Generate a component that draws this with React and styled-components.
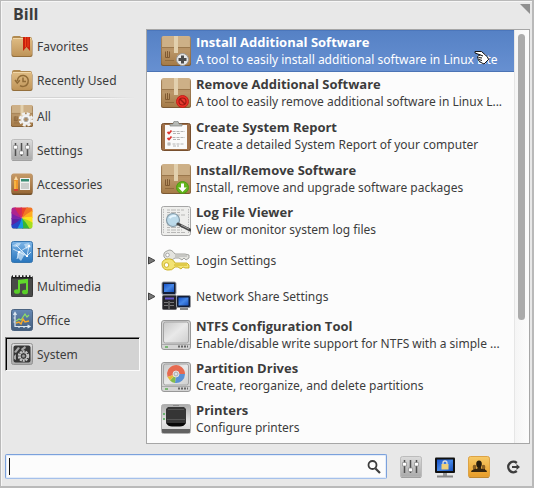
import React from "react";
import styled, { createGlobalStyle, css } from "styled-components";

const GlobalStyle = createGlobalStyle`
  *, *::before, *::after { box-sizing: border-box; }
  body { margin: 0; background: #e8e8e8; }
  button, input { font: inherit; color: inherit; }
  svg { flex: none; }
`;

const Window = styled.main`
  display: flex;
  flex-direction: column;
  min-height: 100vh;
  padding: 0 2px 7px 4px;
  border: 1px solid #b9b9b9;
  border-width: 1px 2px 2px 1px;
  border-bottom-color: #bababa;
  box-shadow: inset 1px 1px 0 #f6f6f6;
  background: #e8e8e8;
  color: #3c3c3c;
  font-family: "Noto Sans", "Open Sans", sans-serif;
  font-size: 12px;
  line-height: 17px;
`;

const Header = styled.header`
  display: flex;
  justify-content: space-between;
  align-items: flex-start;
  height: 28px;
  padding: 3px 0 0 8px;
`;

const UserName = styled.h1`
  margin: 0;
  font-family: "Open Sans", "Noto Sans", sans-serif;
  font-size: 16px;
  line-height: 20px;
  font-weight: 700;
`;

const ResizeGrip = styled.span`
  width: 10px;
  height: 10px;
  background: #8f8f8f;
  clip-path: polygon(0 0, 100% 0, 100% 100%);
`;

const Body = styled.div`
  flex: 1;
  display: grid;
  grid-template-columns: 135px minmax(0, 1fr);
  gap: 6px;
`;

const Sidebar = styled.nav`
  display: flex;
  flex-direction: column;
`;

const Category = styled.button`
  display: flex;
  align-items: center;
  gap: 4px;
  height: 34px;
  padding: 0 0 0 4px;
  border: 2px solid transparent;
  background: transparent;
  text-align: left;
  white-space: nowrap;
  ${(p) =>
    p.$active &&
    css`
      background: #d3d3d3;
      border-color: #777 #fafafa #fafafa #777;
      border-width: 1px;
      padding-left: 5px;
      box-shadow: inset 1px 1px 0 #000;
    `}
`;

const Divider = styled.hr`
  width: 126px;
  height: 2px;
  margin: 0 0 0 4px;
  border: 0;
  background: linear-gradient(90deg, #e8e8e8, #d4d4d4 20%, #d4d4d4 70%, #e8e8e8) top / 100% 1px no-repeat,
    linear-gradient(90deg, #e8e8e8, #fafafa 20%, #fafafa 70%, #e8e8e8) bottom / 100% 1px no-repeat;
`;

const ListPanel = styled.section`
  display: grid;
  grid-template-columns: minmax(0, 1fr) 15px;
  border: 1px solid #a6a6a6;
  background: #fcfcfc;
`;

const AppList = styled.ul`
  margin: 0;
  padding: 0;
  list-style: none;
`;

const AppRow = styled.button`
  display: flex;
  align-items: center;
  width: 100%;
  height: ${(p) => p.$height}px;
  padding: 0;
  border: 0;
  background: transparent;
  text-align: left;
  ${(p) =>
    p.$selected &&
    css`
      color: #fff;
      background: linear-gradient(#5581c5, #6790d1);
      box-shadow: inset 0 1px 0 #4b76bb, inset 0 -1px 0 #4b74b5;
    `}
`;

const Expander = styled.span`
  display: flex;
  flex: none;
  width: 14px;
`;

const AppText = styled.span`
  display: flex;
  flex-direction: column;
  min-width: 0;
  padding-left: 5px;
  white-space: nowrap;
`;

const Title = styled.strong`
  font-family: "Open Sans", "Noto Sans", sans-serif;
  font-size: 13px;
  font-weight: 700;
`;

const ScrollTrack = styled.div`
  display: flex;
  justify-content: center;
  padding: 4px 1px 0 0;
  border-left: 1px solid #e6e6e6;
  background: linear-gradient(90deg, #f5f5f5, #fcfcfc);
`;

const ScrollThumb = styled.div`
  width: 7px;
  height: 70%;
  border-radius: 4px;
  background: #ababab;
`;

const Footer = styled.footer`
  display: flex;
  align-items: center;
  margin-top: 10px;
`;

const SearchBox = styled.label`
  position: relative;
  display: flex;
  flex: 1;
  align-items: center;
  height: 25px;
  padding-right: 4px;
  border: 1px solid #7ba1dc;
  border-bottom-color: #a5c0ea;
  border-radius: 2px;
  background: #fcfcfc;
  box-shadow: inset 0 0 0 1px #e3ecf9;
`;

const SearchInput = styled.input`
  flex: 1;
  min-width: 0;
  height: 21px;
  padding: 0 4px;
  border: 0;
  outline: 0;
  background: transparent;
  caret-color: transparent;
`;

const Caret = styled.span`
  position: absolute;
  left: 3px;
  top: 3px;
  width: 1px;
  height: 17px;
  background: #111;
`;

const Actions = styled.div`
  display: flex;
  gap: 12px;
  padding: 0 6px 0 13px;
`;

const ActionButton = styled.button`
  display: flex;
  padding: 0;
  border: 0;
  background: transparent;
`;

const Pointer = styled.svg`
  position: absolute;
  left: 474px;
  top: 50px;
  pointer-events: none;
`;

const Svg = ({ size = 22, children }) => (
  <svg width={size} height={size} viewBox={`0 0 ${size} ${size}`} aria-hidden="true">
    {children}
  </svg>
);

const GradientDefs = styled.svg`
  display: block;
`;

const Gradients = () => (
  <GradientDefs width="0" height="0" aria-hidden="true">
    <defs>
      <linearGradient id="tan" x2="0" y2="1"><stop stopColor="#dfbc84" /><stop offset="1" stopColor="#bf9458" /></linearGradient>
      <linearGradient id="box" x2="0" y2="1"><stop stopColor="#cfb28a" /><stop offset="1" stopColor="#a57b48" /></linearGradient>
      <linearGradient id="silver" x2="0" y2="1"><stop stopColor="#dcdcdc" /><stop offset="1" stopColor="#a9a9a9" /></linearGradient>
      <linearGradient id="drive" x2="1" y2="1"><stop stopColor="#c6c6c6" /><stop offset=".5" stopColor="#e9e9e9" /><stop offset="1" stopColor="#cecece" /></linearGradient>
      <linearGradient id="sky" x2="0" y2="1"><stop stopColor="#7eb5e7" /><stop offset="1" stopColor="#2775bd" /></linearGradient>
      <linearGradient id="slate" x2="0" y2="1"><stop stopColor="#6689b5" /><stop offset="1" stopColor="#435d7c" /></linearGradient>
      <linearGradient id="screen" x2="1" y2="1"><stop stopColor="#1652cb" /><stop offset=".5" stopColor="#4687e6" /><stop offset="1" stopColor="#1650bd" /></linearGradient>
      <linearGradient id="amber" x2="0" y2="1"><stop stopColor="#f7ca68" /><stop offset="1" stopColor="#e79c27" /></linearGradient>
      <linearGradient id="wood" x2="0" y2="1"><stop stopColor="#c79b69" /><stop offset="1" stopColor="#976836" /></linearGradient>
      <linearGradient id="printer" x2="0" y2="1"><stop stopColor="#aaa" /><stop offset=".6" stopColor="#e9e9e9" /><stop offset="1" stopColor="#ccc" /></linearGradient>
    </defs>
  </GradientDefs>
);

const Folder = ({ children }) => (
  <Svg>
    <path d="M1 3Q1 1 3 1H9L10 2H19Q21 2 21 4V8H1Z" fill="#b18a50" />
    <rect x=".5" y="4" width="21" height="18" rx="2" fill="#946f3c" />
    <rect x="1" y="3" width="20" height="18" rx="2" fill="url(#tan)" />
    <path d="M2 3.500H20" stroke="#f0d6a7" />
    {children}
  </Svg>
);

const FavoritesIcon = () => (
  <Folder>
    <path d="M12 2H19V16L15.500 12L12 16Z" fill="#c8200c" />
    <path d="M14.500 2V12M17 2V12" stroke="#f1431b" />
  </Folder>
);

const RecentIcon = () => (
  <Folder>
    <path d="M6.300 12A5.500 5.500 0 1 1 9 16.700M4 11L6.300 14L8.800 11.300M12 8.500V12.500H15" fill="none" stroke="#906b37" strokeWidth="1.500" />
  </Folder>
);

const Carton = () => (
  <>
    <rect x="0" y="1" width="30" height="29" rx="2" fill="#7c5a34" />
    <rect x=".5" y="0" width="29" height="29" rx="2" fill="url(#box)" />
    <path d="M2 1H28L29 11H1Z" fill="#cdb087" />
    <path d="M1 11.500H29" stroke="#9b784d" />
    <path d="M1 12H29V14H1Z" fill="#b89366" />
    <path d="M13 0H17V17H13Z" fill="#e2d0ae" />
    <path d="M4.500 15.500V21.500H8.500V15.500M6.500 15V21" fill="none" stroke="#805a32" />
    <path d="M4 24.500H13" stroke="#916b3d" />
  </>
);

const CartonAdd = () => (
  <Svg size={30}>
    <Carton />
    <circle cx="21.500" cy="23.500" r="6" fill="#e8e8e8" stroke="#999" />
    <path d="M21.500 19.500V27.500M17.500 23.500H25.500" stroke="#4b4b4b" strokeWidth="3" />
  </Svg>
);

const CartonForbid = () => (
  <Svg size={30}>
    <Carton />
    <circle cx="21.500" cy="23.500" r="6" fill="#ef3026" stroke="#c3211a" />
    <circle cx="21.500" cy="23.500" r="3.500" fill="#e63a2e" stroke="#9c1a12" strokeWidth="1.200" />
    <path d="M19 21L24 26" stroke="#9c1a12" strokeWidth="1.500" />
  </Svg>
);

const CartonDown = () => (
  <Svg size={30}>
    <Carton />
    <circle cx="21.500" cy="23.500" r="6" fill="#64b51c" stroke="#4f9a16" />
    <path d="M20 19.500H23V23.500H25.800L21.500 28L17.200 23.500H20Z" fill="#fff" />
  </Svg>
);

const AllIcon = () => (
  <Svg>
    <svg width="22" height="22" viewBox="0 0 30 30"><Carton /></svg>
    <circle cx="15" cy="14.500" r="5" fill="#f5f5f5" stroke="#ddd" />
    <circle cx="15" cy="14.500" r="6" fill="none" stroke="#f1f1f1" strokeWidth="2.500" strokeDasharray="3 1.710" />
    <circle cx="15" cy="14.500" r="2.200" fill="#ad8d66" stroke="#aaa" />
  </Svg>
);

const MixerIcon = () => (
  <Svg>
    <rect x=".5" y="1" width="21" height="21" rx="2" fill="#858585" />
    <rect x=".5" y=".5" width="21" height="20.500" rx="2" fill="url(#silver)" stroke="#bcbcbc" />
    <path d="M4.500 4V17M10.500 4V17M16.500 4V17" stroke="#505050" strokeWidth="1.500" />
    <path d="M2.500 6.500H6.500V10H2.500ZM8.500 12H12.500V15.500H8.500ZM14.500 6.500H18.500V10H14.500Z" fill="#fff" stroke="#898989" strokeWidth=".7" />
  </Svg>
);

const AccessoriesIcon = () => (
  <Svg>
    <rect x=".5" y="1" width="21" height="21" rx="2" fill="#71502b" />
    <rect x=".5" y=".5" width="21" height="20" rx="2" fill="url(#wood)" />
    <path d="M3 7L5 3L7 7V18H3Z" fill="#ee972c" />
    <path d="M3 7L5 3L7 7Z" fill="#f6ddb0" />
    <path d="M4 8V16" stroke="#ffd159" />
    <path d="M3 16H7V18H3Z" fill="#d54435" />
    <rect x="9" y="5" width="10" height="12" fill="#f2f2f0" />
    <rect x="10" y="6" width="8" height="2.500" fill="#358b72" />
    <path d="M10.500 11H18M10.500 13H18M10.500 15H18" stroke="#51605c" strokeDasharray="1 1" />
  </Svg>
);

const WHEEL = ["#e8432c", "#f27725", "#ffad20", "#ffe31a", "#a6df20", "#36b735", "#159be0", "#2449c9", "#5a22a3", "#7c23a9", "#ad248f", "#d52a57"];
const GraphicsIcon = () => (
  <Svg>
    <clipPath id="graphicsClip"><rect x=".5" y=".5" width="21" height="21" rx="2" /></clipPath>
    <g clipPath="url(#graphicsClip)">
      {WHEEL.map((color, i) => (
        <path key={color} d="M11 11Q9 3 10 -6L20 -4Q14 5 11 11Z" fill={color} transform={`rotate(${i * 30} 11 11)`} />
      ))}
      <path d="M0 21.500H22" stroke="#545454" opacity=".6" />
    </g>
  </Svg>
);

const InternetIcon = () => (
  <Svg>
    <rect x=".5" y=".5" width="21" height="21" rx="2" fill="url(#sky)" stroke="#3876ae" />
    <path d="M1 5L6 2H10L8 5L5 6ZM13 3L18 2L20 6L15 8ZM6 12L11 10L14 13L10 20L7 17Z" fill="#c5e0f5" opacity=".75" />
    <path d="M2 8L8 11L18 5M8 11L6 18M8 11L16 15L20 11M5 4L16 15M18 5L16 15" stroke="#e8f5ff" fill="none" strokeWidth=".8" />
    <path d="M7 10H9V12H7ZM15 14H17V16H15ZM17 4H19V6H17Z" fill="#fff" />
  </Svg>
);

const MultimediaIcon = () => (
  <Svg>
    <rect x=".5" y="1" width="21" height="21" rx="1.500" fill="#484a48" stroke="#363736" />
    <path d="M1 2H21" stroke="#1c1c1c" strokeWidth="3" />
    <path d="M2 1H21" stroke="#ececec" strokeWidth="2" strokeDasharray="2 1.500" />
    <path d="M8 16V6L16 5V16" fill="none" stroke="#61da2c" strokeWidth="2" />
    <path d="M8 7.500L16 6.500" stroke="#61da2c" strokeWidth="3" />
    <ellipse cx="6" cy="16.500" rx="3" ry="2.300" fill="#58ce27" />
    <ellipse cx="14" cy="17" rx="3" ry="2.300" fill="#58ce27" />
  </Svg>
);

const OfficeIcon = () => (
  <Svg>
    <rect x=".5" y=".5" width="21" height="21" rx="2" fill="url(#slate)" stroke="#4a6381" />
    <path d="M4 4V17.500H18M2.500 6L4 3.500L5.500 6M16.500 16L19 17.500L16.500 19M2.500 9H4M2.500 13H4M8 17.500V19M13 17.500V19" fill="none" stroke="#dce7ef" strokeWidth="1.200" />
    <path d="M5 12L8 10L10 11L14 5L16 8L18 6" fill="none" stroke="#8fdf65" strokeWidth="1.200" />
    <path d="M5 14L8 13L10 15L12 10L14 13L18 12" fill="none" stroke="#f6a92b" strokeWidth="1.500" />
  </Svg>
);

const SystemIcon = () => (
  <Svg>
    <rect x=".5" y=".5" width="21" height="21" rx="2" fill="url(#silver)" stroke="#929292" />
    <rect x="2.500" y="2.500" width="17" height="17" rx="2" fill="#353535" />
    <circle cx="12.500" cy="13" r="4.500" fill="none" stroke="#c6c6c6" strokeWidth="2.500" strokeDasharray="2 .830" />
    <circle cx="12.500" cy="13" r="3.500" fill="#414141" stroke="#c6c6c6" />
    <circle cx="12.500" cy="13" r="1.500" fill="#999" />
    <path d="M3 9L7 4L9 5L5 10ZM10 6L14 3L15 5L11 8ZM3 13L5 11V17L3 16Z" fill="#a6a6a6" />
  </Svg>
);

const ReportIcon = () => (
  <Svg size={30}>
    <rect x=".5" y="2.500" width="29" height="27" rx="2" fill="#a17149" stroke="#78502f" />
    <rect x="4" y="4" width="22" height="24" fill="#fafafa" />
    <path d="M9 5V3H12Q12 0 15 0T18 3H21V5Z" fill="#b7bab6" stroke="#80827f" strokeWidth=".7" />
    <path d="M6.500 11L8 12.500L10.500 9.500M6.500 17L8 18.500L10.500 15.500" stroke="#de3732" strokeWidth="1.800" fill="none" />
    <path d="M11.500 10.500H24M12 12.500H19M11.500 16.500H24M12 18.500H19M11.500 23H23M12 25H18" stroke="#a3a3a3" strokeWidth=".8" strokeDasharray="3 1" />
    <rect x="7" y="22" width="2" height="2" fill="none" stroke="#999" strokeWidth=".8" />
  </Svg>
);

const LogIcon = () => (
  <Svg size={30}>
    <rect x=".5" y=".5" width="29" height="29" rx="2" fill="#eeeeec" stroke="#a6a6a6" />
    <path d="M2.500 3V28M27.500 3V28" stroke="#bbb" strokeDasharray="1.500 1" />
    <path d="M6 4H23M6 6.500H20M6 9H24M6 19H17M6 21.500H24M6 24H21M6 26.500H24" stroke="#aaa" strokeWidth=".8" strokeDasharray="3 1 5 1" />
    <circle cx="12" cy="14" r="6.500" fill="#b6d7ea" fillOpacity=".9" stroke="#849aa7" strokeWidth="1.200" />
    <path d="M8.500 12Q11 9 15 10" stroke="#e6f6ff" strokeWidth="2" fill="none" />
    <path d="M17 18L29 24" stroke="#454545" strokeWidth="3" strokeLinecap="round" />
    <path d="M20 19L28 23" stroke="#a7a7a7" />
  </Svg>
);

const KeysIcon = () => (
  <Svg size={30}>
    <g strokeLinejoin="round" strokeWidth=".8">
      <path d="M3 12Q2 7 6 6Q10 3 14 9H24L28 10V13L25 15L23 13L21 15L18 13H14Q9 17 5 14Z" fill="#e4e4df" stroke="#8f908b" />
      <path d="M14 11H26" stroke="#999" />
      <circle cx="6.500" cy="10" r="1.800" fill="#fff" stroke="#999" />
      <path d="M1 19Q1 15 6 14Q12 13 14 18H26L28 20V23H24L22 22L20 24L17 22H14Q11 26 6 25Q1 24 1 19Z" fill="#f3e373" stroke="#c2a40e" />
      <path d="M13 20H26" stroke="#c2a40e" />
      <circle cx="5.500" cy="20" r="2.300" fill="#fff" stroke="#c2a40e" />
    </g>
  </Svg>
);

const NetworkIcon = () => (
  <Svg size={30}>
    <rect x="1.500" y="14.500" width="14" height="14" rx="1" fill="#252529" stroke="#65656b" />
    <path d="M4 17.500H13" stroke="#6555cd" strokeWidth="2" />
    <path d="M3 21.500H7M9 21.500H13M3 24.500H7M9 24.500H13" stroke="#77777a" />
    <path d="M8 20V28" stroke="#aaa" strokeWidth=".8" />
    <rect x="1" y="1" width="14" height="12.500" rx="1.500" fill="#121e38" stroke="#96999f" />
    <rect x="3" y="3" width="10" height="8" fill="url(#screen)" />
    <rect x="15.500" y="14.500" width="14" height="12" rx="1.500" fill="#121e38" stroke="#96999f" />
    <rect x="17.500" y="16.500" width="10" height="8" fill="url(#screen)" />
    <path d="M19 28H27" stroke="#888" strokeWidth="2" />
  </Svg>
);

const Drive = ({ children }) => (
  <Svg size={30}>
    <rect x=".5" y=".5" width="29" height="29" rx="2.500" fill="#d4d4d4" stroke="#989898" />
    <rect x="2.500" y="2" width="25" height="21" rx="2" fill="url(#drive)" stroke="#a4a4a4" />
    <path d="M1 24.500H29" stroke="#aaa" />
    <path d="M4 27H7" stroke="#5eae55" strokeWidth="1.500" />
    <path d="M17 26.500H27" stroke="#666" strokeWidth="2" strokeDasharray="2 1" />
    {children}
  </Svg>
);

const PartitionIcon = () => (
  <Drive>
    <path d="M15 12L6.500 15A9 9 0 1 1 24 12Z" fill="#e66a50" />
    <path d="M15 12H24A9 9 0 0 1 14 21Z" fill="#5a91d5" />
    <path d="M15 12L14 21A9 9 0 0 1 9 18.500Z" fill="#83bd4b" />
    <path d="M15 12L9 18.500L6.500 15Z" fill="#e7ba38" />
    <circle cx="15" cy="12" r="3" fill="#bbb" stroke="#e2e2e2" />
    <circle cx="15" cy="12" r="1" fill="#eee" />
  </Drive>
);

const PrinterIcon = () => (
  <Svg size={30}>
    <rect x=".5" y=".5" width="29" height="29" rx="2" fill="url(#printer)" stroke="#b0b0b0" />
    <path d="M1 25H29V28Q29 29 28 29H2Q1 29 1 28Z" fill="#626262" />
    <path d="M7 3H23L25 5V19H5V5Z" fill="#353535" />
    <path d="M7 5.500H23M6 15.500H24" stroke="#555" />
    <path d="M5 19H25Q23 22.500 19 22.500H11Q7 22.500 5 19Z" fill="#070707" />
    <path d="M3 9V11M3 14V16" stroke="#49ad53" strokeWidth="1.500" />
    <path d="M12 1.500H18" stroke="#888" />
  </Svg>
);

const LockIcon = () => (
  <Svg>
    <path d="M9 16H13V20H9Z" fill="#999" />
    <path d="M3 20.500H19" stroke="#888" strokeWidth="2" />
    <rect x="1" y="1.500" width="20" height="15.500" rx="1" fill="#111" />
    <rect x="3" y="3.500" width="16" height="11.500" fill="url(#screen)" />
    <path d="M9 9V7Q9 5 11 5T13 7V9" fill="none" stroke="#ddd" strokeWidth="1.300" />
    <rect x="7.500" y="8" width="7" height="5.500" fill="#efd07a" />
  </Svg>
);

const UsersIcon = () => (
  <Svg>
    <rect x=".5" y="1" width="21" height="21" rx="2" fill="#a56c16" />
    <rect x=".5" y=".5" width="21" height="20.500" rx="2" fill="url(#amber)" stroke="#dda345" />
    <path d="M3 16Q3 14 5.500 13.500V11H8V13L9.500 12.500V8Q9 5 11 5T13 8V12.500L14.500 13V11H17V13.500Q19 14 19 16Z" fill="#35250e" />
    <ellipse cx="6.500" cy="11" rx="1.800" ry="2.200" fill="#895f23" />
    <ellipse cx="15.500" cy="11" rx="1.800" ry="2.200" fill="#895f23" />
    <ellipse cx="11" cy="8" rx="2.800" ry="3.500" fill="#241b0d" />
  </Svg>
);

const LogoutIcon = () => (
  <Svg>
    <path d="M14.800 7A5.200 5.200 0 1 0 14.800 15" fill="none" stroke="#3d3d3d" strokeWidth="2.400" />
    <path d="M10 10H14.500V8L18 11L14.500 14V12H10Z" fill="#3d3d3d" />
  </Svg>
);

const SearchIcon = () => (
  <Svg size={16}>
    <circle cx="6.500" cy="6" r="4" fill="none" stroke="#3d3d3d" strokeWidth="1.800" />
    <path d="M9.500 9.500L14 14" stroke="#3d3d3d" strokeWidth="2.200" />
  </Svg>
);

const Arrow = () => (
  <svg width="9" height="9" viewBox="0 0 9 9" aria-hidden="true">
    <path d="M1.500 1L8 4.500L1.500 8Z" fill="#777" stroke="#444" />
  </svg>
);

const categories = [
  ["Favorites", FavoritesIcon],
  ["Recently Used", RecentIcon],
  ["All", AllIcon],
  ["Settings", MixerIcon],
  ["Accessories", AccessoriesIcon],
  ["Graphics", GraphicsIcon],
  ["Internet", InternetIcon],
  ["Multimedia", MultimediaIcon],
  ["Office", OfficeIcon],
  ["System", SystemIcon],
];

const apps = [
  { title: "Install Additional Software", text: "A tool to easily install additional software in Linux Lite", Icon: CartonAdd, selected: true },
  { title: "Remove Additional Software", text: "A tool to easily remove additional software in Linux L...", Icon: CartonForbid },
  { title: "Create System Report", text: "Create a detailed System Report of your computer", Icon: ReportIcon, height: 44 },
  { title: "Install/Remove Software", text: "Install, remove and upgrade software packages", Icon: CartonDown },
  { title: "Log File Viewer", text: "View or monitor system log files", Icon: LogIcon },
  { text: "Login Settings", Icon: KeysIcon, height: 36 },
  { text: "Network Share Settings", Icon: NetworkIcon, height: 36 },
  { title: "NTFS Configuration Tool", text: "Enable/disable write support for NTFS with a simple ...", Icon: Drive },
  { title: "Partition Drives", text: "Create, reorganize, and delete partitions", Icon: PartitionIcon },
  { title: "Printers", text: "Configure printers", Icon: PrinterIcon },
];

const actions = [
  ["All Settings", MixerIcon],
  ["Lock Screen", LockIcon],
  ["Switch Users", UsersIcon],
  ["Log Out", LogoutIcon],
];

export default function App() {
  return (
    <>
      <GlobalStyle />
      <Gradients />
      <Window>
        <Header>
          <UserName>Bill</UserName>
          <ResizeGrip />
        </Header>
        <Body>
          <Sidebar aria-label="Categories">
            {categories.map(([name, Icon], i) => (
              <React.Fragment key={name}>
                {i === 2 && <Divider />}
                <Category type="button" $active={name === "System"} aria-pressed={name === "System"}>
                  <Icon />
                  {name}
                </Category>
              </React.Fragment>
            ))}
          </Sidebar>
          <ListPanel aria-label="Applications">
            <AppList>
              {apps.map(({ title, text, Icon, selected, height = 42 }) => (
                <li key={title || text}>
                  <AppRow type="button" $height={height} $selected={selected}>
                    <Expander>{!title && <Arrow />}</Expander>
                    <Icon />
                    <AppText>
                      {title && <Title>{title}</Title>}
                      <span>{text}</span>
                    </AppText>
                  </AppRow>
                </li>
              ))}
            </AppList>
            <ScrollTrack>
              <ScrollThumb />
            </ScrollTrack>
          </ListPanel>
        </Body>
        <Footer>
          <SearchBox>
            <SearchInput type="text" aria-label="Search" />
            <Caret />
            <SearchIcon />
          </SearchBox>
          <Actions>
            {actions.map(([name, Icon]) => (
              <ActionButton key={name} type="button" aria-label={name}>
                <Icon />
              </ActionButton>
            ))}
          </Actions>
        </Footer>
        <Pointer width="16" height="16" viewBox="0 0 16 16" aria-hidden="true">
          <path d="M1 1.500H7.500L13.500 7L14.500 9.500L10 14L7 12.500L4.500 10.500L4 8.500L3.500 7L4.500 5.500L6.500 5L1 3Z" fill="#fff" stroke="#111" />
          <path d="M6.500 5L9 6M4.500 7.500L8 8M5 9.500L8 10.500M10 14L14.500 9.500" fill="none" stroke="#111" />
        </Pointer>
      </Window>
    </>
  );
}
